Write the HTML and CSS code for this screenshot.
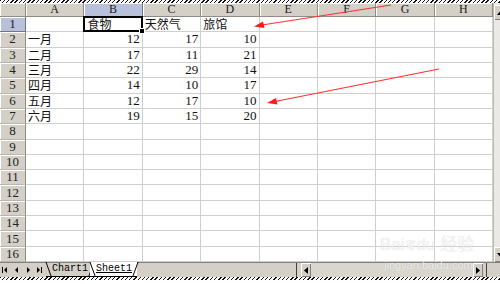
FILE: index.html
```html
<!DOCTYPE html>
<html lang="zh-CN">
<head>
  <meta charset="UTF-8" />
  <title>Sheet1</title>
  <link rel="stylesheet" href="styles.css">
</head>
<body>
  <div class="frame">
    <div class="hatch"></div>

    <div class="sheet">
      <div class="grid">
        <div class="corner"></div>
        <div class="colhead">A</div>
        <div class="colhead sel">B</div>
        <div class="colhead">C</div>
        <div class="colhead">D</div>
        <div class="colhead">E</div>
        <div class="colhead">F</div>
        <div class="colhead">G</div>
        <div class="colhead">H</div>

        <div class="rowhead sel">1</div>
        <div class="cell"></div>
        <div class="cell active">食物<span class="handle"></span></div>
        <div class="cell">天然气</div>
        <div class="cell">旅馆</div>
        <div class="cell"></div><div class="cell"></div><div class="cell"></div><div class="cell"></div>

        <div class="rowhead">2</div>
        <div class="cell">一月</div>
        <div class="cell num">12</div><div class="cell num">17</div><div class="cell num">10</div>
        <div class="cell"></div><div class="cell"></div><div class="cell"></div><div class="cell"></div>

        <div class="rowhead">3</div>
        <div class="cell">二月</div>
        <div class="cell num">17</div><div class="cell num">11</div><div class="cell num">21</div>
        <div class="cell"></div><div class="cell"></div><div class="cell"></div><div class="cell"></div>

        <div class="rowhead">4</div>
        <div class="cell">三月</div>
        <div class="cell num">22</div><div class="cell num">29</div><div class="cell num">14</div>
        <div class="cell"></div><div class="cell"></div><div class="cell"></div><div class="cell"></div>

        <div class="rowhead">5</div>
        <div class="cell">四月</div>
        <div class="cell num">14</div><div class="cell num">10</div><div class="cell num">17</div>
        <div class="cell"></div><div class="cell"></div><div class="cell"></div><div class="cell"></div>

        <div class="rowhead">6</div>
        <div class="cell">五月</div>
        <div class="cell num">12</div><div class="cell num">17</div><div class="cell num">10</div>
        <div class="cell"></div><div class="cell"></div><div class="cell"></div><div class="cell"></div>

        <div class="rowhead">7</div>
        <div class="cell">六月</div>
        <div class="cell num">19</div><div class="cell num">15</div><div class="cell num">20</div>
        <div class="cell"></div><div class="cell"></div><div class="cell"></div><div class="cell"></div>

        <div class="rowhead">8</div>
        <div class="cell"></div><div class="cell"></div><div class="cell"></div><div class="cell"></div>
        <div class="cell"></div><div class="cell"></div><div class="cell"></div><div class="cell"></div>
        <div class="rowhead">9</div>
        <div class="cell"></div><div class="cell"></div><div class="cell"></div><div class="cell"></div>
        <div class="cell"></div><div class="cell"></div><div class="cell"></div><div class="cell"></div>
        <div class="rowhead">10</div>
        <div class="cell"></div><div class="cell"></div><div class="cell"></div><div class="cell"></div>
        <div class="cell"></div><div class="cell"></div><div class="cell"></div><div class="cell"></div>
        <div class="rowhead">11</div>
        <div class="cell"></div><div class="cell"></div><div class="cell"></div><div class="cell"></div>
        <div class="cell"></div><div class="cell"></div><div class="cell"></div><div class="cell"></div>
        <div class="rowhead">12</div>
        <div class="cell"></div><div class="cell"></div><div class="cell"></div><div class="cell"></div>
        <div class="cell"></div><div class="cell"></div><div class="cell"></div><div class="cell"></div>
        <div class="rowhead">13</div>
        <div class="cell"></div><div class="cell"></div><div class="cell"></div><div class="cell"></div>
        <div class="cell"></div><div class="cell"></div><div class="cell"></div><div class="cell"></div>
        <div class="rowhead">14</div>
        <div class="cell"></div><div class="cell"></div><div class="cell"></div><div class="cell"></div>
        <div class="cell"></div><div class="cell"></div><div class="cell"></div><div class="cell"></div>
        <div class="rowhead">15</div>
        <div class="cell"></div><div class="cell"></div><div class="cell"></div><div class="cell"></div>
        <div class="cell"></div><div class="cell"></div><div class="cell"></div><div class="cell"></div>
        <div class="rowhead">16</div>
        <div class="cell"></div><div class="cell"></div><div class="cell"></div><div class="cell"></div>
        <div class="cell"></div><div class="cell"></div><div class="cell"></div><div class="cell"></div>
      </div>

      <div class="vscroll">
        <div class="vbtn">
          <svg width="7" height="4" viewBox="0 0 7 4"><polygon points="0,4 7,4 3.5,0" fill="#000"/></svg>
        </div>
        <div class="vtrack"></div>
        <div class="vbtn">
          <svg width="7" height="4" viewBox="0 0 7 4"><polygon points="0,0 7,0 3.5,4" fill="#000"/></svg>
        </div>
      </div>
    </div>

    <div class="tabbar">
      <div class="nav">
        <svg width="44" height="8" viewBox="0 0 44 8">
          <rect x="2" y="1" width="1" height="6" fill="#000"/>
          <polygon points="7,1 7,7 4,4" fill="#000"/>
          <polygon points="18,1 18,7 15,4" fill="#000"/>
          <polygon points="27,1 27,7 30,4" fill="#000"/>
          <polygon points="37,1 37,7 40,4" fill="#000"/>
          <rect x="41" y="1" width="1" height="6" fill="#000"/>
        </svg>
      </div>
      <div class="tabs">
        <span class="tab">Chart1</span>
        <span class="tab on">Sheet1</span>
      </div>
      <div class="split"></div>
      <div class="hscroll">
        <div class="hbtn">
          <svg width="4" height="7" viewBox="0 0 4 7"><polygon points="4,0 4,7 0,3.5" fill="#000"/></svg>
        </div>
        <div class="htrack"></div>
        <div class="hbtn">
          <svg width="4" height="7" viewBox="0 0 4 7"><polygon points="0,0 0,7 4,3.5" fill="#000"/></svg>
        </div>
        <div class="hend"></div>
      </div>
    </div>

    <div class="hatch"></div>

    <svg class="arrows" width="500" height="284" viewBox="0 0 500 284">
      <line x1="391" y1="5" x2="262" y2="25" stroke="#ff3030" stroke-width="1.2"/>
      <polygon points="254,26.5 263,21.5 264.5,28" fill="#ff1a1a"/>
      <line x1="439" y1="69" x2="275" y2="101.5" stroke="#ff3030" stroke-width="1.2"/>
      <polygon points="267,103 276,98 277.5,104.5" fill="#ff1a1a"/>
    </svg>

    <div class="watermark">
      <div class="wm-logo">Bai<span class="paw">&#x2766;</span>du 经验</div>
      <div class="wm-url">jingyan.baidu.com</div>
    </div>
  </div>
</body>
</html>
```

FILE: styles.css
```css
body {
  margin: 0;
  width: 500px;
  height: 284px;
  overflow: hidden;
  background: #fff;
  font-family: "Liberation Serif", "Noto Sans CJK SC", serif;
}

.frame {
  position: relative;
  width: 500px;
  height: 284px;
  display: flex;
  flex-direction: column;
}

.hatch {
  height: 3px;
  background: repeating-linear-gradient(135deg, #111 0 1px, #fff 1px 3px);
}

.hatch:last-of-type {
  height: 7px;
}

.sheet {
  display: flex;
  height: 259px;
}

.grid {
  width: 493px;
  display: grid;
  grid-template-columns: 26px repeat(8, 58.4px);
  grid-template-rows: 14px repeat(16, 15.3125px);
}

.corner,
.colhead,
.rowhead {
  background: #d4d0c8;
  color: #222;
  font-size: 12px;
  display: flex;
  align-items: center;
  justify-content: center;
  border-right: 1px solid #8f8c86;
  border-bottom: 1px solid #8f8c86;
  box-shadow: inset 1px 1px 0 #fff;
}

.rowhead {
  border-bottom-color: #b9b6b0;
  font-size: 13px;
}

.colhead.sel,
.rowhead.sel {
  background: #b9c0da;
  border-color: #6f7590;
}

.cell {
  border-right: 1px solid #cfcfcf;
  border-bottom: 1px solid #cfcfcf;
  font-size: 12px;
  color: #111;
  display: flex;
  align-items: center;
  padding-left: 2px;
  white-space: nowrap;
  overflow: visible;
}

.cell.num {
  justify-content: flex-end;
  padding: 0 2px 0 0;
  font-size: 13px;
}

.cell.active {
  position: relative;
  border: 2px solid #000;
  margin: -1px 0 0 -1px;
}

.handle {
  position: absolute;
  right: -4px;
  bottom: -4px;
  width: 4px;
  height: 4px;
  background: #000;
  border: 1px solid #fff;
}

.vscroll {
  flex: 1;
  display: flex;
  flex-direction: column;
  background: #ebe9e5;
  border-left: 1px solid #bdbab4;
}

.vbtn {
  height: 15px;
  background: #d4d0c8;
  box-shadow: inset 1px 1px 0 #fff, inset -1px -1px 0 #808080;
  display: flex;
  align-items: center;
  padding-left: 3px;
}

.vbtn:first-child {
  margin-top: 2px;
}

.vtrack {
  flex: 1;
}

.tabbar {
  height: 15px;
  display: flex;
  align-items: stretch;
  background: #d4d0c8;
  border-top: 1px solid #808080;
  box-sizing: border-box;
}

.nav {
  display: flex;
  align-items: center;
  width: 46px;
}

.tabs {
  display: flex;
  font-family: "Liberation Mono", "Liberation Serif", monospace;
  font-size: 10px;
  color: #000;
  margin-top: -1px;
}

.tab {
  position: relative;
  padding: 0 5px 0 6px;
  line-height: 13px;
  border-bottom: 1px solid #000;
}

.tab::before,
.tab::after {
  content: '';
  position: absolute;
  top: 0;
  bottom: 0;
  width: 1px;
  background: #000;
}

.tab::before {
  left: 2px;
  transform: skewX(20deg);
}

.tab::after {
  right: 1px;
  transform: skewX(-20deg);
}

.tab.on {
  background: #fff;
  margin-left: -3px;
  text-decoration: underline;
}

.split {
  flex: 1;
  border-right: 1px solid #404040;
  box-shadow: inset -3px 0 0 #d4d0c8;
}

.hscroll {
  width: 199px;
  display: flex;
  padding-left: 4px;
}

.hbtn {
  width: 10px;
  background: #d4d0c8;
  box-shadow: inset 1px 1px 0 #fff, inset -1px -1px 0 #808080;
  display: flex;
  align-items: center;
  justify-content: center;
}

.htrack {
  flex: 1;
  background: #d9d6cf;
}

.hend {
  width: 14px;
  border-left: 3px solid #d4d0c8;
  box-shadow: inset 1px 0 0 #404040;
}

.arrows {
  position: absolute;
  left: 0;
  top: 0;
  pointer-events: none;
}

.watermark {
  position: absolute;
  left: 380px;
  top: 232px;
  color: rgba(255, 255, 255, 0.8);
  text-shadow: 0 0 1px rgba(0, 0, 0, 0.2);
  font-family: "Liberation Sans", "Noto Sans CJK SC", sans-serif;
  pointer-events: none;
}

.wm-logo {
  font-size: 17px;
  line-height: 26px;
}

.paw {
  font-size: 14px;
  vertical-align: top;
}

.wm-url {
  font-size: 11px;
  line-height: 14px;
  padding-left: 4px;
}
```
